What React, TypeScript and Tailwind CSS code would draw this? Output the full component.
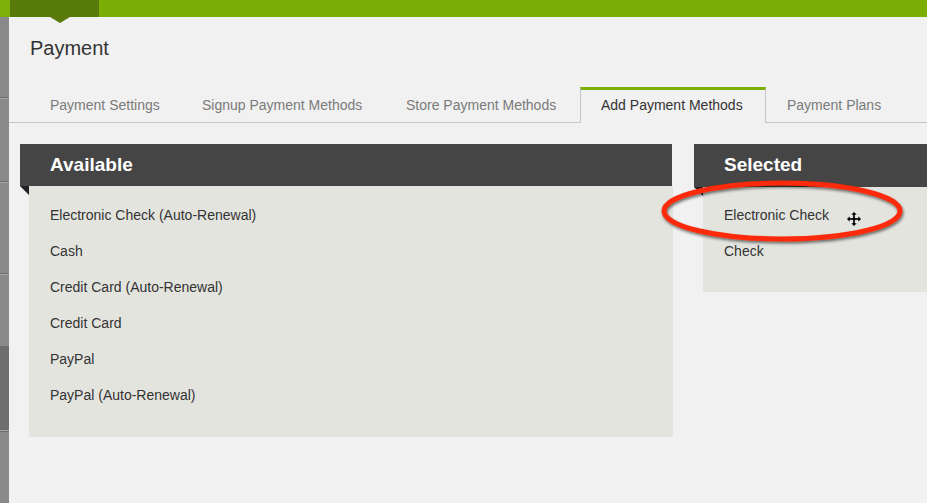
import React from "react";

const available = [
  "Electronic Check (Auto-Renewal)",
  "Cash",
  "Credit Card (Auto-Renewal)",
  "Credit Card",
  "PayPal",
  "PayPal (Auto-Renewal)",
];
const selected = ["Electronic Check", "Check"];

function Tab({ label, w }: { label: string; w: string }) {
  return (
    <div className={`${w} flex items-center pl-[21px] pt-[2px] text-[14px] text-[#7a7a7a] shrink-0`}>{label}</div>
  );
}

export default function App() {
  return (
    <div
      className="relative w-[927px] h-[503px] overflow-hidden bg-[#f1f1f1] flex flex-col"
      style={{ fontFamily: '"Liberation Sans", Arial, Helvetica, sans-serif' }}
    >
      {/* top bar */}
      <div className="h-[17px] flex shrink-0">
        <div className="w-[10px] bg-[#7db10a]" />
        <div className="w-[89px] bg-[#587a0b] relative">
          <div className="absolute left-[40px] top-[17px] w-0 h-0 border-l-[10px] border-r-[10px] border-t-[6px] border-l-transparent border-r-transparent border-t-[#587a0b] z-10" />
        </div>
        <div className="flex-1 bg-[#7cae08]" />
      </div>

      <div className="flex flex-1">
        {/* sidebar */}
        <div className="w-[9px] flex flex-col bg-[#898989] shrink-0">
          <div className="h-[81px] bg-[#8a8a8a] border-b border-[#6f6f6f]" />
          <div className="h-[84px] bg-[#8a8a8a] border-t border-[#a4a4a4] border-b border-b-[#6f6f6f]" />
          <div className="h-[92px] bg-[#8a8a8a] border-t border-[#a4a4a4] border-b border-b-[#6f6f6f]" />
          <div className="h-[73px] bg-[#8a8a8a] border-t border-[#a4a4a4] border-b border-b-[#6f6f6f]" />
          <div className="h-[84px] bg-[#6e6e6e] border-b border-[#a4a4a4]" />
          <div className="flex-1 bg-[#8a8a8a] border-t border-[#6f6f6f]" />
        </div>

        {/* main */}
        <div className="flex-1 flex flex-col">
          <div className="h-[70px] pt-[20px] pl-[21px] shrink-0">
            <div className="text-[20px] leading-[22px] text-[#333333]">Payment</div>
          </div>

          {/* tabs */}
          <div className="h-[36px] flex pl-[20px] border-b border-[#c6c6c6] shrink-0">
            <Tab label="Payment Settings" w="w-[152px]" />
            <Tab label="Signup Payment Methods" w="w-[204px]" />
            <Tab label="Store Payment Methods" w="w-[195px]" />
            <div className="w-[186px] shrink-0 flex items-center pl-[20px] pb-[2px] text-[14px] text-[#333333] bg-[#f1f1f1] border-t-[3px] border-t-[#7cae08] border-l border-r border-[#c6c6c6] -mb-px">
              Add Payment Methods
            </div>
            <Tab label="Payment Plans" w="w-[150px]" />
          </div>

          {/* panels */}
          <div className="flex pl-[11px] pt-[21px] gap-[21px]">
            <div className="w-[653px] flex flex-col shrink-0">
              <div className="w-[652px] h-[42px] bg-[#454545] flex items-center pl-[30px] text-[19px] font-bold text-white">
                Available
              </div>
              <div className="flex">
                <div className="w-0 h-0 border-t-[9px] border-l-[9px] border-t-[#222222] border-l-transparent shrink-0" />
                <div className="w-[644px] bg-[#e4e4df] pt-[11px] pb-[24px] pl-[21px]">
                  {available.map((a) => (
                    <div key={a} className="h-[36px] leading-[36px] text-[14px] text-[#333333]">
                      {a}
                    </div>
                  ))}
                </div>
              </div>
            </div>

            <div className="flex-1 flex flex-col">
              <div className="h-[43px] bg-[#454545] flex items-center pl-[30px] text-[19px] font-bold text-white">
                Selected
              </div>
              <div className="flex">
                <div className="w-0 h-0 border-t-[9px] border-l-[9px] border-t-[#222222] border-l-transparent shrink-0" />
                <div className="flex-1 bg-[#e4e4df] pt-[10px] pb-[23px] pl-[21px]">
                  {selected.map((a) => (
                    <div key={a} className="h-[36px] leading-[36px] text-[14px] text-[#333333]">
                      {a}
                    </div>
                  ))}
                </div>
              </div>
            </div>
          </div>
        </div>
      </div>

      {/* red annotation ellipse */}
      <svg className="absolute left-[650px] top-[170px] pointer-events-none" width="270" height="85" viewBox="0 0 270 85">
        <defs>
          <filter id="sh" x="-20%" y="-40%" width="140%" height="180%">
            <feDropShadow dx="1" dy="2" stdDeviation="1.6" floodColor="#000" floodOpacity="0.55" />
          </filter>
        </defs>
        <ellipse cx="132" cy="41" rx="118" ry="28" fill="none" stroke="#fb2a08" strokeWidth="5" filter="url(#sh)" />
      </svg>

      {/* move cursor */}
      <svg className="absolute left-[846px] top-[211px] pointer-events-none" width="16" height="16" viewBox="0 0 16 16">
        <path
          d="M8 0.5 L11.5 4 L9.3 4 L9.3 6.7 L12 6.7 L12 4.5 L15.5 8 L12 11.5 L12 9.3 L9.3 9.3 L9.3 12 L11.5 12 L8 15.5 L4.5 12 L6.7 12 L6.7 9.3 L4 9.3 L4 11.5 L0.5 8 L4 4.5 L4 6.7 L6.7 6.7 L6.7 4 L4.5 4 Z"
          fill="#000"
          stroke="#fff"
          strokeWidth="0.8"
          strokeLinejoin="miter"
        />
      </svg>
    </div>
  );
}
